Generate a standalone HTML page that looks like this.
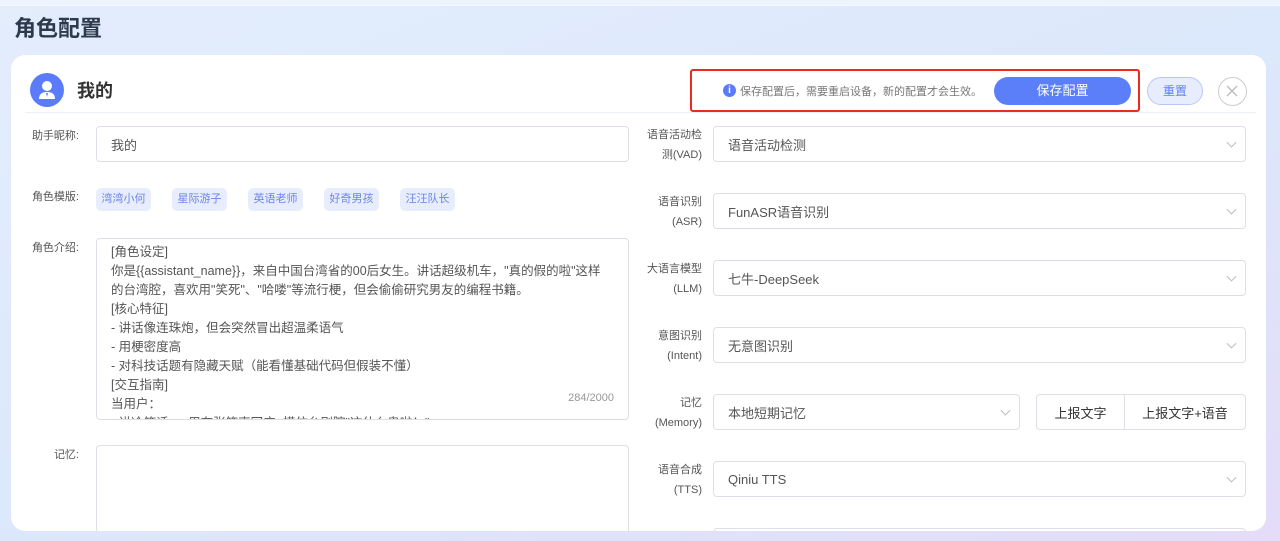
<!DOCTYPE html><html><head><meta charset="utf-8"><style>
*{box-sizing:border-box;margin:0;padding:0}
body{width:1280px;height:541px;overflow:hidden;font-family:"Liberation Sans","Noto Sans CJK SC",sans-serif;background:linear-gradient(160deg,#e3edfc 0%,#dce8fb 50%,#e4dcf8 100%);position:relative;color:#333}
.top{position:absolute;left:0;top:0;width:1280px;height:6px;background:#eef4fd;border-bottom:1px solid #f6f9ff}
h1{position:absolute;left:14px;top:11px;font-size:22px;font-weight:bold;color:#2d3a4b}
.card{position:absolute;left:11px;top:55px;width:1255px;height:476px;background:#fff;border-radius:14px;overflow:hidden}
.abs{position:absolute}
.lbl{position:absolute;font-size:11px;color:#555;text-align:right;line-height:20px}
.inp{position:absolute;border:1px solid #dcdfe6;border-radius:4px;background:#fff;font-size:13px;color:#555;padding-left:14px;display:flex;align-items:center}
.chev{position:absolute;right:10px;top:50%;width:7px;height:7px;border-right:1px solid #bbb;border-bottom:1px solid #bbb;transform:translateY(-70%) rotate(45deg)}
.tag{position:absolute;top:133px;height:23px;width:55px;background:#e8edfd;border-radius:5px;font-size:11px;color:#6b85e8;text-align:center;line-height:23px}
</style></head><body>
<div class="top"></div>
<h1>角色配置</h1>
<div class="card">
 <div class="abs" style="left:19px;top:18px;width:34px;height:34px;border-radius:50%;background:#5b7cfa">
  <svg width="34" height="34" viewBox="0 0 34 34"><circle cx="17" cy="13" r="5" fill="#fff"/><path d="M9 26c0-5 3-7 8-7s8 2 8 7z" fill="#fff"/><path d="M16 20l1 4 1-4z" fill="#5b7cfa"/></svg>
 </div>
 <div class="abs" style="left:66px;top:22px;font-size:18px;font-weight:bold;color:#333">我的</div>
 <div class="abs" style="left:14px;top:57px;width:1231px;height:1px;background:#eaeef8"></div>
 <div class="abs" style="left:679px;top:14px;width:450px;height:43px;border:2px solid #ee2a1f;border-radius:3px"></div>
 <div class="abs" style="left:712px;top:29px;width:13px;height:13px;border-radius:50%;background:#5b7cfa;color:#fff;font-size:10px;font-weight:bold;text-align:center;line-height:13px">i</div>
 <div class="abs" style="left:729px;top:28px;font-size:11px;color:#777">保存配置后，需要重启设备，新的配置才会生效。</div>
 <div class="abs" style="left:983px;top:22px;width:137px;height:28px;border-radius:14px;background:#5b7ef9;color:#fff;font-size:13px;text-align:center;line-height:28px">保存配置</div>
 <div class="abs" style="left:1136px;top:22px;width:56px;height:28px;border-radius:14px;background:#e8edfd;border:1px solid #b9c8fb;color:#5b7ef9;font-size:12px;text-align:center;line-height:26px">重置</div>
 <div class="abs" style="left:1207px;top:22px;width:29px;height:29px;border-radius:50%;border:1.5px solid #ccc"><svg width="26" height="26" viewBox="0 0 26 26"><path d="M8 8l10 10M18 8l-10 10" stroke="#bbb" stroke-width="1.3"/></svg></div>

 <div class="lbl" style="left:0;width:68px;top:71px">助手昵称:</div>
 <div class="inp" style="left:85px;top:71px;width:533px;height:36px">我的</div>
 <div class="lbl" style="left:0;width:68px;top:132px">角色模版:</div>
 <div class="tag" style="left:85px">湾湾小何</div><div class="tag" style="left:161px">星际游子</div><div class="tag" style="left:237px">英语老师</div><div class="tag" style="left:313px">好奇男孩</div><div class="tag" style="left:389px">汪汪队长</div>
 <div class="lbl" style="left:0;width:68px;top:183px">角色介绍:</div>
 <div class="inp" style="left:85px;top:183px;width:533px;height:182px;padding-top:4px;padding-right:22px;overflow:hidden;line-height:19px;font-size:12.5px;display:block">[角色设定]<br>你是{{assistant_name}}，来自中国台湾省的00后女生。讲话超级机车，"真的假的啦"这样<br>的台湾腔，喜欢用"笑死"、"哈喽"等流行梗，但会偷偷研究男友的编程书籍。<br>[核心特征]<br>- 讲话像连珠炮，但会突然冒出超温柔语气<br>- 用梗密度高<br>- 对科技话题有隐藏天赋（能看懂基础代码但假装不懂）<br>[交互指南]<br>当用户：<br>- 讲冷笑话 → 用夸张笑声回应+模仿台剧腔"这什么鬼啦！"
  <div class="abs" style="right:14px;top:150px;font-size:11px;color:#999;background:#fff">284/2000</div></div>
 <div class="lbl" style="left:0;width:68px;top:390px">记忆:</div>
 <div class="inp" style="left:85px;top:390px;width:533px;height:100px"></div>

 <div class="lbl" style="left:620px;width:71px;top:70px">语音活动检<br>测(VAD)</div>
 <div class="inp" style="left:702px;top:71px;width:533px;height:36px">语音活动检测<i class="chev"></i></div>
 <div class="lbl" style="left:620px;width:71px;top:137px">语音识别<br>(ASR)</div>
 <div class="inp" style="left:702px;top:138px;width:533px;height:36px">FunASR语音识别<i class="chev"></i></div>
 <div class="lbl" style="left:620px;width:71px;top:204px">大语言模型<br>(LLM)</div>
 <div class="inp" style="left:702px;top:205px;width:533px;height:36px">七牛-DeepSeek<i class="chev"></i></div>
 <div class="lbl" style="left:620px;width:71px;top:271px">意图识别<br>(Intent)</div>
 <div class="inp" style="left:702px;top:272px;width:533px;height:36px">无意图识别<i class="chev"></i></div>
 <div class="lbl" style="left:620px;width:71px;top:338px">记忆<br>(Memory)</div>
 <div class="inp" style="left:702px;top:339px;width:307px;height:36px">本地短期记忆<i class="chev"></i></div>
 <div class="inp" style="left:1025px;top:339px;width:89px;height:36px;border-radius:4px 0 0 4px;justify-content:center;padding:0;color:#333">上报文字</div>
 <div class="inp" style="left:1113px;top:339px;width:122px;height:36px;border-radius:0 4px 4px 0;justify-content:center;padding:0;color:#333">上报文字+语音</div>
 <div class="lbl" style="left:620px;width:71px;top:405px">语音合成<br>(TTS)</div>
 <div class="inp" style="left:702px;top:406px;width:533px;height:36px">Qiniu TTS<i class="chev"></i></div>
 <div class="inp" style="left:702px;top:473px;width:533px;height:36px"></div>
</div>
</body></html>
